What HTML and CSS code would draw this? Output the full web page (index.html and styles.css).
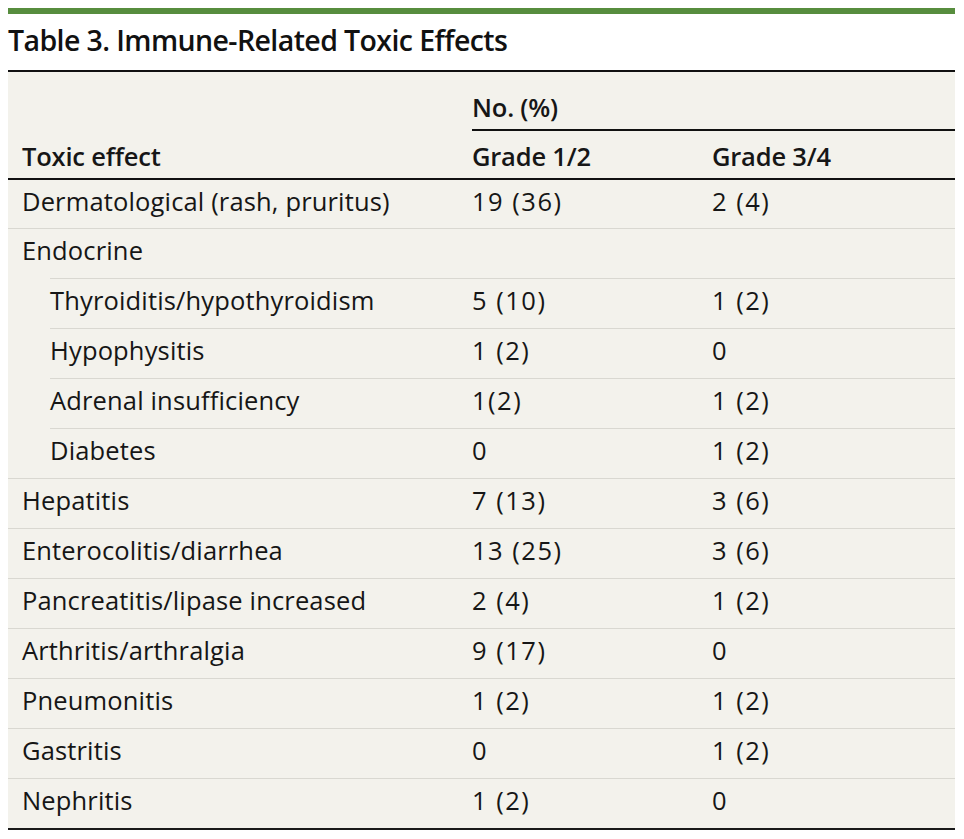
FILE: index.html
```html
<!DOCTYPE html>
<html lang="en">
<head>
<meta charset="utf-8">
<title>Table 3. Immune-Related Toxic Effects</title>
<link rel="stylesheet" href="styles.css">
</head>
<body>
<div class="figure">
  <div class="topbar"></div>
  <h1 class="title">Table 3. Immune-Related Toxic Effects</h1>
  <div class="table">
    <div class="head">
      <div class="h-effect">Toxic effect</div>
      <div class="h-group">No. (%)</div>
      <div class="h-col">Grade 1/2</div>
      <div class="h-col">Grade 3/4</div>
    </div>
    <div class="row first"><div>Dermatological (rash, pruritus)</div><div class="num">19 (36)</div><div class="num">2 (4)</div></div>
    <div class="row"><div>Endocrine</div><div class="num"></div><div class="num"></div></div>
    <div class="row sub"><div>Thyroiditis/hypothyroidism</div><div class="num">5 (10)</div><div class="num">1 (2)</div></div>
    <div class="row sub"><div>Hypophysitis</div><div class="num">1 (2)</div><div class="num">0</div></div>
    <div class="row sub"><div>Adrenal insufficiency</div><div class="num">1(2)</div><div class="num">1 (2)</div></div>
    <div class="row sub"><div>Diabetes</div><div class="num">0</div><div class="num">1 (2)</div></div>
    <div class="row"><div>Hepatitis</div><div class="num">7 (13)</div><div class="num">3 (6)</div></div>
    <div class="row"><div>Enterocolitis/diarrhea</div><div class="num">13 (25)</div><div class="num">3 (6)</div></div>
    <div class="row"><div>Pancreatitis/lipase increased</div><div class="num">2 (4)</div><div class="num">1 (2)</div></div>
    <div class="row"><div>Arthritis/arthralgia</div><div class="num">9 (17)</div><div class="num">0</div></div>
    <div class="row"><div>Pneumonitis</div><div class="num">1 (2)</div><div class="num">1 (2)</div></div>
    <div class="row"><div>Gastritis</div><div class="num">0</div><div class="num">1 (2)</div></div>
    <div class="row last"><div>Nephritis</div><div class="num">1 (2)</div><div class="num">0</div></div>
  </div>
</div>
</body>
</html>
```
FILE: styles.css
```css
html, body {
  margin: 0;
  padding: 0;
  background: #ffffff;
}

body {
  padding: 8px;
  font-family: "Open Sans", "Noto Sans", "Liberation Sans", sans-serif;
  color: #161616;
}

.figure {
  width: 947px;
}

.topbar {
  height: 6px;
  background: #578d3e;
}

.title {
  margin: 0;
  font-size: 28.5px;
  font-weight: 600;
  line-height: 52px;
  padding-bottom: 4px;
  letter-spacing: -0.6px;
  border-bottom: 2px solid #111;
  color: #111;
}

.table {
  background: #f3f2ec;
  border-bottom: 2px solid #1a1a1a;
  font-size: 25.5px;
  letter-spacing: 0.15px;
}

.head {
  display: grid;
  grid-template-columns: 450px 240px 1fr;
  grid-template-rows: auto auto;
  border-bottom: 2px solid #111;
  font-weight: 600;
  line-height: 43px;
  letter-spacing: -0.2px;
}

.h-effect {
  grid-column: 1;
  grid-row: 2;
  padding: 4px 0 0 14px;
}

.h-group {
  grid-column: 2 / 4;
  grid-row: 1;
  margin-left: 14px;
  padding-top: 14px;
  border-bottom: 2px solid #111;
}

.h-col {
  grid-row: 2;
  padding: 4px 0 0 14px;
}

.row {
  display: grid;
  grid-template-columns: 450px 240px 1fr;
  border-top: 1px solid #d9d8d1;
  line-height: 43px;
  padding-bottom: 6px;
}

.row > div {
  padding-left: 14px;
}

.row > .num {
  letter-spacing: 1.5px;
}

.row.first {
  border-top: none;
  padding-bottom: 5px;
}

.row.sub {
  margin-left: 42px;
  grid-template-columns: 408px 240px 1fr;
}

.row.sub > div:first-child {
  padding-left: 0;
}

.row.last {
  padding-bottom: 6px;
}
```
